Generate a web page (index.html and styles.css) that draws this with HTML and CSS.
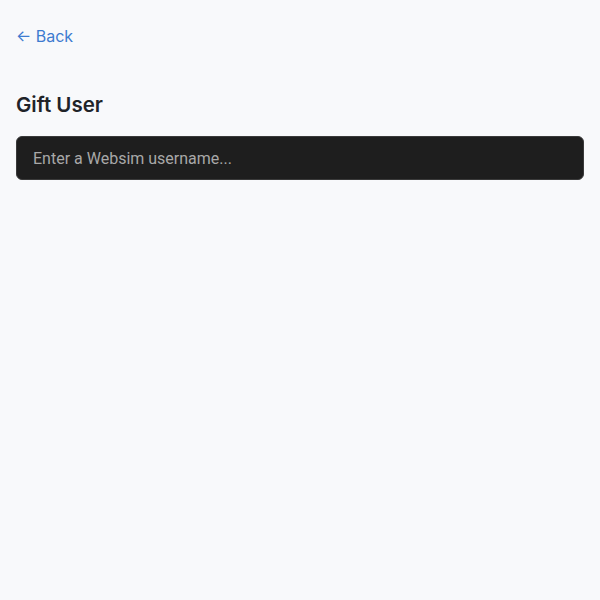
FILE: index.html
```html
<!DOCTYPE html>
<html>
<head>
<meta charset="utf-8">
<link rel="stylesheet" href="styles.css">
</head>
<body>
<main class="page">
  <a class="back" href="#">← Back</a>
  <h1 class="title">Gift User</h1>
  <input class="user-input" type="text" placeholder="Enter a Websim username...">
</main>
</body>
</html>
```

FILE: styles.css
```css
html, body {
  margin: 0;
  background: #f8f9fb;
}
body {
  font-family: Inter, "Noto Sans", sans-serif;
  color: #1f2328;
}
.page {
  padding: 24px 16px 16px;
  display: flex;
  flex-direction: column;
  align-items: flex-start;
}
.back {
  color: #3d7bd0;
  text-decoration: none;
  font-size: 16px;
  line-height: 24px;
}
.title {
  margin: 43px 0 0;
  font-size: 20.5px;
  font-weight: 600;
  line-height: 28px;
}
.user-input {
  box-sizing: border-box;
  margin-top: 17px;
  width: 100%;
  height: 44px;
  padding: 0 16px;
  background: #1e1e1e;
  border: 1px solid #3a3a3a;
  border-radius: 6px;
  color: #eee;
  font-family: Roboto, sans-serif;
  font-size: 16px;
  outline: none;
}
.user-input::placeholder {
  color: #a8a8a8;
}
```
